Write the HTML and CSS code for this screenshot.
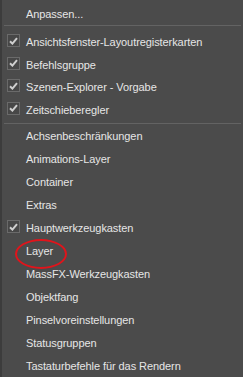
FILE: index.html
```html
<!DOCTYPE html>
<html lang="de">
<head>
    <meta charset="UTF-8">
    <title>Menü</title>
    <link rel="stylesheet" href="styles.css">
</head>
<body>
    <div class="menu">
        <div class="item top">Anpassen...</div>
        <div class="separator first"></div>
        <div class="group-checked">
            <div class="item"><span class="check"><svg viewBox="0 0 9 8"><path d="M1 4.2 L3.4 6.6 L8 1.2" /></svg></span>Ansichtsfenster-Layoutregisterkarten</div>
            <div class="item"><span class="check"><svg viewBox="0 0 9 8"><path d="M1 4.2 L3.4 6.6 L8 1.2" /></svg></span>Befehlsgruppe</div>
            <div class="item"><span class="check"><svg viewBox="0 0 9 8"><path d="M1 4.2 L3.4 6.6 L8 1.2" /></svg></span>Szenen-Explorer - Vorgabe</div>
            <div class="item"><span class="check"><svg viewBox="0 0 9 8"><path d="M1 4.2 L3.4 6.6 L8 1.2" /></svg></span>Zeitschieberegler</div>
        </div>
        <div class="separator second"></div>
        <div class="item">Achsenbeschränkungen</div>
        <div class="item">Animations-Layer</div>
        <div class="item">Container</div>
        <div class="item">Extras</div>
        <div class="item"><span class="check"><svg viewBox="0 0 9 8"><path d="M1 4.2 L3.4 6.6 L8 1.2" /></svg></span>Hauptwerkzeugkasten</div>
        <div class="item marked">Layer</div>
        <div class="item">MassFX-Werkzeugkasten</div>
        <div class="item">Objektfang</div>
        <div class="item">Pinselvoreinstellungen</div>
        <div class="item">Statusgruppen</div>
        <div class="item">Tastaturbefehle für das Rendern</div>
    </div>
</body>
</html>
```

FILE: styles.css
```css
* {
    margin: 0;
    padding: 0;
    box-sizing: border-box;
}

body {
    background-color: #4b4b4b;
    font-family: "Liberation Sans", Tahoma, sans-serif;
    font-size: 11px;
    letter-spacing: -0.08px;
    color: #e6e6e6;
    overflow: hidden;
}

/* Menu container */
.menu {
    width: 243px;
    height: 377px;
    border-left: 2px solid #3c3c3c;
    padding-top: 3px;
}

.item {
    position: relative;
    height: 23px;
    line-height: 23px;
    padding-left: 24px;
    white-space: nowrap;
}

.item.top {
    height: 22px;
    line-height: 22px;
}

.group-checked .item {
    height: 22.5px;
    line-height: 22.5px;
}

.separator {
    height: 1px;
    margin: 0 2px;
    background-color: #636363;
}

.separator.first {
    margin-bottom: 5px;
}

.separator.second {
    margin-top: 2px;
    margin-bottom: 1px;
}

/* Checkbox */
.check {
    position: absolute;
    left: 5px;
    top: 3px;
    width: 13px;
    height: 13px;
    border: 1px solid #6a6a6a;
    background-color: #474747;
    display: flex;
    align-items: center;
    justify-content: center;
}

.check svg {
    width: 9px;
    height: 8px;
}

.check path {
    fill: none;
    stroke: #cfcfcf;
    stroke-width: 2;
}

/* Red annotation ring */
.marked::after {
    content: "";
    position: absolute;
    left: 13px;
    top: -1px;
    width: 48px;
    height: 26px;
    border: 2px solid #e0141b;
    border-radius: 50%;
}
```
